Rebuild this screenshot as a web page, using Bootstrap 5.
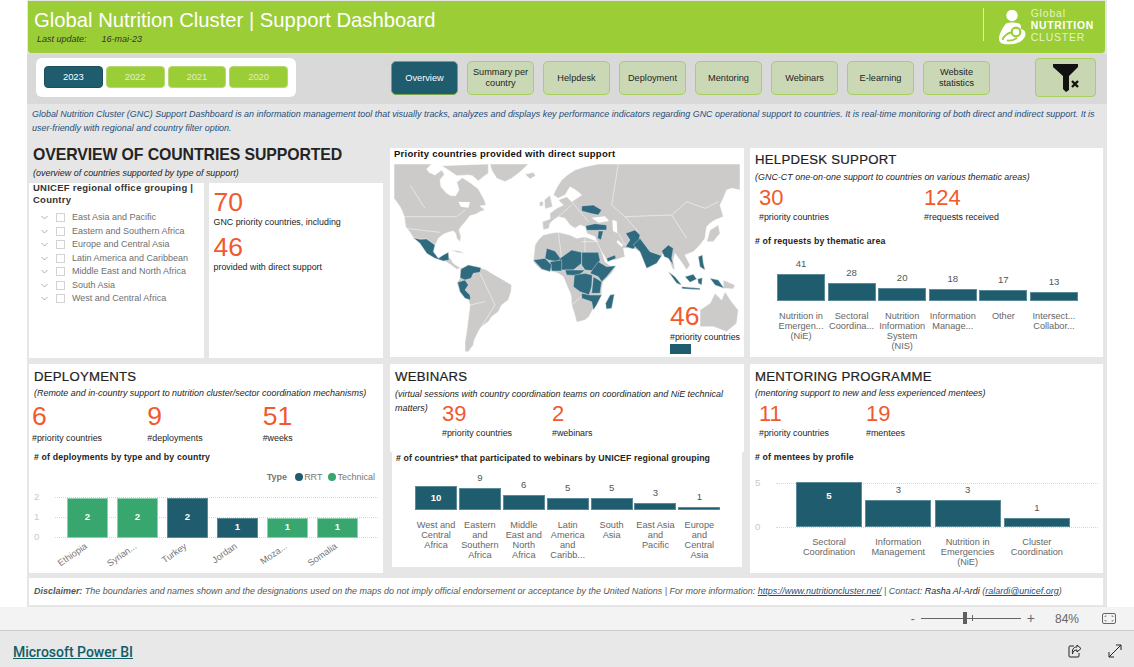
<!DOCTYPE html>
<html lang="en">
<head>
<meta charset="utf-8">
<title>Global Nutrition Cluster | Support Dashboard</title>
<link href="https://cdn.jsdelivr.net/npm/bootstrap@5.3.0/dist/css/bootstrap.min.css" rel="stylesheet">
<style>
html,body{height:667px;overflow:hidden;background:#fff;font-family:"Liberation Sans",Arial,sans-serif;color:#252423}
.shell{height:667px}
.canvas{width:1080px;height:607px;margin-left:27px;background:#e6e6e6}
.hdr{height:53px;margin:1px 2px 0 1px;background:#9bcd37;border-radius:0 0 4px 4px;border-bottom:1px solid #d5e8a8;padding:0 11px 0 6px;flex:none}
.hdr-title{font-size:20.25px;line-height:26px;color:#fff;margin:6px 0 0}
.hdr-date{font-size:9px;line-height:12px;font-style:italic;color:#333;margin:0 0 0 3px}
.hdr-date span{margin-left:15px}
.logo-rule{width:1px;height:33px;background:#dff0b5;margin:7px 15px 0 0}
.logo-mark{margin:9px 4px 0 0}
.logo-txt{color:#e6f2c9;font-size:10.4px;line-height:12px;margin:7px 0 0 0;letter-spacing:.85px}
.logo-txt b{display:block;color:#fff;letter-spacing:.75px}
.tools{height:50px;background:#d9d9d9;flex:none}
.year-card{width:260px;height:39px;background:#fff;border-radius:6px;margin:4px 95px 0 9px;padding:8px 8px 0;gap:3px}
.year-btn{width:59px;height:22px;padding:0;border-radius:4px;border:1px solid #b5d873;background:#9bcd37;color:#e3eec6;font-size:9.4px}
.year-btn.is-on{background:#1f5c6e;border-color:#1b4f5f;color:#fff}
.nav-btn{width:67px;height:34px;padding:0 4px;margin:7px 9px 0 0;border-radius:5px;border:1px solid #a8d05c;background:#cbd8b5;color:#252423;font-size:9.2px;line-height:11px}
.nav-btn.is-on{background:#1f5c6e;color:#fff;border-color:#7da54f}
.clear-btn{width:61px;height:39px;padding:0;margin:4px 0 0 36px;border-radius:4px;border:1px solid #a8d05c;background:#c9d6b2}
.intro{height:44px;flex:none;padding:3px 4px 0 5px;font-size:8.95px;line-height:14px;font-style:italic;color:#1f4e79}
.grid-main{display:grid;grid-template-columns:361px 360px 353px;grid-template-rows:209px 209px;row-gap:7px;margin-left:2px;width:1074px;flex:none}
.grid-main>section:nth-child(3n+1){margin-right:7px}
.grid-main>section:nth-child(3n+2){margin-right:6px}
.panel{background:#fff;overflow:hidden}
.ov-col{background:#e6e6e6}
.ov-title{font-size:15.85px;font-weight:700;line-height:20px;color:#252423;margin:-3px 0 0 4px;letter-spacing:-.1px}
.sub{font-size:8.95px;line-height:12px;font-style:italic;color:#252423}
.ov-sub{margin:2px 0 4px 4px}
.ov-row{gap:5px;height:175px}
.ov-box{background:#fff;width:175px;height:175px}
.ov-filter{padding:0 4px}
.flt-head{font-size:9.5px;line-height:12px;font-weight:700;letter-spacing:.25px;color:#333;margin:-1px 0 0}
.flt-list{margin:5px 0 0 8px}
.flt-row{height:13.5px;color:#6f6f6f;font-size:9px;line-height:13.5px}
.flt-row i{display:block;width:9px;height:9px;border:1px solid #d3d3d3;margin:0 7px 0 8px}
.ov-stat{padding:0 5px}
.num{color:#f15a2e;line-height:1}
.num-xl{font-size:26.5px}
.num-lg{font-size:22px}
.cap{font-size:8.9px;line-height:12px;color:#252423}
.h-sec{font-size:13.2px;line-height:18px;letter-spacing:.25px;color:#222;margin:0;-webkit-text-stroke:.2px #222}
.pad-sec{padding:2px 5px}
.map-title{font-size:9.5px;line-height:12px;font-weight:700;letter-spacing:.25px;color:#111;margin:0 0 4px 4px}
.map-wrap{position:relative;width:346px;height:188px;margin-left:4px}
.map-wrap svg{display:block}
.map-leg{position:absolute;right:-2px;bottom:-3px;width:72px;height:52px;font-size:8.9px;line-height:11px;color:#252423}
.map-leg .num{margin:0 0 2px;display:block}
.map-leg i{display:block;width:21px;height:10px;background:#1f5c6e;margin:1px 0 0}
.chart-t{font-size:8.75px;line-height:12px;font-weight:700;letter-spacing:.15px;color:#252423;margin:0}
.v{font-size:9.6px;line-height:10px;color:#555;text-align:center;margin-bottom:5px}
.lbl{font-size:9.2px;line-height:10px;color:#666;text-align:center}
.bar{background:#1f5c6e;box-shadow:inset 0 0 0 1px #5d8a98;display:flex;align-items:center;justify-content:center;color:#fff;font-size:9.6px;font-weight:700}
.bar.tech{background:#37a66f;box-shadow:inset 0 0 0 1px #8fcfae}
.col-h{width:48px;margin-right:2.6px}
.col-w{width:42px;margin-right:1.9px}
.col-m{width:66px;margin-right:3.3px}
.col-d{width:41px;margin-right:9px}
.dep-stats{width:116px}
.stack{display:grid}
.stack>*{grid-area:1/1}
.gline{height:20px;font-size:9.6px;color:#c9c9c9}
.gline span{width:10px}
.gline em{display:block;flex:1;border-top:1px dotted #d8d8d8;margin-left:11px}
.rot{width:50px;height:36px;padding-right:29px;justify-content:flex-end}
.rot span{white-space:nowrap;font-size:9.2px;line-height:10px;color:#777;transform:rotate(-35deg);transform-origin:100% 0}
.leg{font-size:9px;color:#777;gap:1px;line-height:12px}
.leg i{display:block;width:8px;height:8px;border-radius:50%}
.web-top{height:88px;padding:4px 5px 0}
.web-bot{background:#fff;height:115px;margin:0 2px;padding:0 4px}
.disc{height:27px;flex:none;width:1074px;margin:5px 0 0 2px;background:#fff;font-size:8.97px;line-height:12px;font-style:italic;color:#555;padding:7px 5px 0;white-space:nowrap}
.disc b{font-weight:400;color:#252423}
.disc a{color:#1f4e79}
.zoombar{height:24px;flex:none;background:#f3f3f3;border-bottom:1px solid #ccc;padding-right:18px;color:#666;font-size:12px}
.zs{position:relative;width:100px;height:1px;background:#666;margin:0 6px}
.zs i{position:absolute;left:42px;top:-6px;width:4px;height:12px;background:#5f5f5f}
.zs u{position:absolute;left:51px;top:-3px;width:1px;height:6px;background:#666}
.foot{height:36px;flex:none;background:#e8e8e8;padding:3px 13px 0}
.foot a{font-family:Roboto,sans-serif;font-size:14px;font-weight:500;color:#115e67;margin-top:3px}
.row1-sec{margin-top:1px}
</style>
</head>
<body>
<div class="shell d-flex flex-column">
<main class="canvas d-flex flex-column">
  <header class="hdr d-flex justify-content-between">
    <div>
      <h1 class="hdr-title fw-normal">Global Nutrition Cluster | Support Dashboard</h1>
      <p class="hdr-date">Last update:<span>16-mai-23</span></p>
    </div>
    <div class="d-flex">
      <div class="logo-rule"></div>
      <svg class="logo-mark" width="28" height="36" viewBox="0 0 28 36" aria-hidden="true"><circle cx="13" cy="5.500" r="5.700" fill="#fff"/><path d="M7 13.500c3-1.500 10-1.500 13 0 2 1 2.500 3 1.500 5.500 3 .5 5 2 5 5 0 5-6 9-12 10-4 .5-9 .5-11.500-.5C1 32.500 0 31 0 28.500 0 24 4 17 7 13.500z" fill="#fff"/><circle cx="17" cy="22" r="4.300" fill="none" stroke="#9bcd37" stroke-width="2.200"/><path d="M3.500 30c1-4 5-7 9-7.500 M8 30.500c3 .5 7-.5 10-2.500" fill="none" stroke="#9bcd37" stroke-width="1.800"/></svg>
      <div class="logo-txt">Global<b>NUTRITION</b>CLUSTER</div>
    </div>
  </header>

  <div class="tools d-flex align-items-start">
    <div class="year-card d-flex">
      <button class="btn year-btn is-on">2023</button>
      <button class="btn year-btn">2022</button>
      <button class="btn year-btn">2021</button>
      <button class="btn year-btn">2020</button>
    </div>
    <button class="btn nav-btn is-on">Overview</button>
    <button class="btn nav-btn">Summary per country</button>
    <button class="btn nav-btn">Helpdesk</button>
    <button class="btn nav-btn">Deployment</button>
    <button class="btn nav-btn">Mentoring</button>
    <button class="btn nav-btn">Webinars</button>
    <button class="btn nav-btn">E-learning</button>
    <button class="btn nav-btn">Website statistics</button>
    <button class="btn clear-btn" aria-label="Clear filters"><svg width="34" height="30" viewBox="0 0 34 30"><path d="M4 1h25v3L20 13v14l-3 2-3-3V13L4 4z" fill="#111"/><path d="M23 18l6 6M29 18l-6 6" stroke="#111" stroke-width="2.400"/></svg></button>
  </div>

  <p class="intro mb-0">Global Nutrition Cluster (GNC) Support Dashboard is an information management tool that visually tracks, analyzes and displays key performance indicators regarding GNC operational support to countries. It is real-time monitoring of both direct and indirect support. It is user-friendly with regional and country filter option.</p>

  <div class="grid-main">
    <section class="ov-col">
      <h2 class="ov-title">OVERVIEW OF COUNTRIES SUPPORTED</h2>
      <p class="sub ov-sub">(overview of countries supported by type of support)</p>
      <div class="d-flex ov-row">
        <div class="ov-box ov-filter">
          <p class="flt-head">UNICEF regional office grouping | Country</p>
          <div class="flt-list">
            <div class="flt-row d-flex align-items-center"><svg width="7" height="5" viewBox="0 0 7 5"><path d="M.5 1l3 3 3-3" fill="none" stroke="#999" stroke-width=".8"/></svg><i></i>East Asia and Pacific</div>
            <div class="flt-row d-flex align-items-center"><svg width="7" height="5" viewBox="0 0 7 5"><path d="M.5 1l3 3 3-3" fill="none" stroke="#999" stroke-width=".8"/></svg><i></i>Eastern and Southern Africa</div>
            <div class="flt-row d-flex align-items-center"><svg width="7" height="5" viewBox="0 0 7 5"><path d="M.5 1l3 3 3-3" fill="none" stroke="#999" stroke-width=".8"/></svg><i></i>Europe and Central Asia</div>
            <div class="flt-row d-flex align-items-center"><svg width="7" height="5" viewBox="0 0 7 5"><path d="M.5 1l3 3 3-3" fill="none" stroke="#999" stroke-width=".8"/></svg><i></i>Latin America and Caribbean</div>
            <div class="flt-row d-flex align-items-center"><svg width="7" height="5" viewBox="0 0 7 5"><path d="M.5 1l3 3 3-3" fill="none" stroke="#999" stroke-width=".8"/></svg><i></i>Middle East and North Africa</div>
            <div class="flt-row d-flex align-items-center"><svg width="7" height="5" viewBox="0 0 7 5"><path d="M.5 1l3 3 3-3" fill="none" stroke="#999" stroke-width=".8"/></svg><i></i>South Asia</div>
            <div class="flt-row d-flex align-items-center"><svg width="7" height="5" viewBox="0 0 7 5"><path d="M.5 1l3 3 3-3" fill="none" stroke="#999" stroke-width=".8"/></svg><i></i>West and Central Africa</div>
          </div>
        </div>
        <div class="ov-box ov-stat">
          <div class="num num-xl" style="margin-top:6px">70</div>
          <div class="cap" style="margin-top:0">GNC priority countries, including</div>
          <div class="num num-xl" style="margin-top:6px">46</div>
          <div class="cap" style="margin-top:1px">provided with direct support</div>
        </div>
      </div>
    </section>

    <section class="panel">
      <h2 class="map-title">Priority countries provided with direct support</h2>
      <div class="map-wrap">
        <svg width="346" height="188" viewBox="27 57 1038 564" role="img" aria-label="World map of priority countries">
          <g fill="#cccbca" stroke="#fff" stroke-width="1.500" stroke-linejoin="round">
            <path d="M27 57L140 57 125 72 132 82 150 90 170 75 178 88 165 105 168 125 185 145 198 152 212 152 222 135 218 120 215 112 232 98 248 108 258 115 280 132 290 150 298 165 303 180 285 183 300 195 285 200 272 208 255 212 245 225 240 232 228 245 222 255 228 275 225 290 215 280 212 265 205 258 190 262 175 268 160 280 156 290 150 300 125 282 105 283 85 278 75 262 62 245 58 215 50 195 45 185 27 160Z"/>
            <path d="M170 62L310 57 310 85 295 95 280 108 262 92 250 90 215 92 190 75Z"/>
            <path d="M175 345L195 338 205 355 228 370 215 373 195 358Z"/>
            <path d="M195 314L225 318 240 326 215 322Z"/>
            <path d="M315 57L430 57 415 72 400 85 380 100 360 110 335 100 320 75Z"/>
            <path d="M420 88L445 82 452 92 435 102Z"/>
            <path d="M478 165L495 150 503 185 480 192Z"/>
            <path d="M463 172L474 168 475 182 464 184Z"/>
            <path d="M225 372L250 360 285 368 305 375 320 385 350 402 380 420 378 440 370 465 350 480 340 500 320 515 310 530 290 545 280 560 268 585 265 600 250 620 240 620 240 590 245 560 250 520 255 480 250 465 225 440 215 415 225 400Z"/>
            <path d="M450 300L462 282 475 270 500 264 520 262 555 270 575 280 600 275 640 290 650 320 660 350 675 362 692 365 680 385 655 410 650 430 650 450 635 470 625 490 612 515 600 525 575 532 568 505 560 480 558 450 545 420 535 395 520 385 495 378 470 375 455 362 445 350Z"/>
            <path d="M505 150L515 128 530 105 550 88 570 75 600 65 640 57 1065 57 1065 135 1040 130 1025 135 1015 160 1005 180 1015 215 990 225 975 235 965 245 960 280 945 300 925 320 900 330 915 360 905 375 895 360 885 345 870 325 865 345 870 375 862 370 850 340 835 325 815 355 785 370 775 345 765 320 745 310 715 310 720 335 690 345 665 345 650 320 640 300 630 275 605 265 600 245 585 240 570 250 555 240 540 220 520 215 505 225 495 235 492 250 475 255 472 230 495 222 495 205 515 190 535 180 520 165 545 155 560 170 590 150 570 135 555 125 540 150 520 160Z"/>
            <path d="M975 255L1000 240 1005 265 985 290 965 290Z"/>
            <path d="M945 495L975 475 990 445 1010 465 1020 440 1040 470 1060 495 1055 535 1025 560 985 545 945 545Z"/>
            <path d="M1015 405L1050 420 1045 432 1015 430Z"/>
          </g>
          <g fill="#fff">
            <path d="M620 218L660 214 672 228 640 233Z"/>
            <path d="M682 225L695 228 697 265 684 258Z"/>
            <path d="M565 130L585 145 560 165 555 150Z"/>
            <path d="M220 170L255 172 250 188 228 185Z"/>
            <path d="M698 285L715 300 710 306 695 292Z"/>
            <path d="M530 225L552 245 545 248 526 232Z"/>
          </g>
          <g fill="none" stroke="#fff" stroke-width="1.500">
            <path d="M58 215L215 215 240 195M75 120L120 190M60 250L165 262M700 57L680 180 720 215 860 210 905 170 960 190 1000 170M560 170L610 230M520 215L560 180M720 215L760 260M860 210L905 280M600 275L600 325M520 262L530 340M640 290L590 290M700 265L720 300M285 385L330 480 280 560M255 480L300 470M600 445L560 480"/>
          </g>
          <g fill="#2f6a7e" stroke="#dbe6ea" stroke-width="1.300" stroke-linejoin="round">
            <path d="M85 278L105 283 125 282 150 300 145 320 160 340 175 330 190 322 192 345 175 348 150 340 125 325 105 295Z"/>
            <path d="M228 372L250 360 288 368 285 382 265 385 258 400 240 405 225 398Z"/>
            <path d="M218 412L240 405 250 420 240 435 255 450 257 465 240 460 225 440Z"/>
            <path d="M485 310L510 318 530 345 515 350 490 345 480 340Z"/>
            <path d="M525 340L560 315 590 322 590 355 565 375 530 375 515 355Z"/>
            <path d="M495 350L530 345 530 378 500 378Z"/>
            <path d="M590 322L640 322 645 345 635 378 600 375 590 360Z"/>
            <path d="M640 350L665 365 692 362 665 395 650 410 640 395 615 385 625 370Z"/>
            <path d="M445 345L480 340 500 360 495 380 470 372Z"/>
            <path d="M540 375L600 375 580 392 545 390Z"/>
            <path d="M568 390L600 385 622 390 620 425 612 450 585 440 565 425Z"/>
            <path d="M625 395L650 410 645 445 620 445Z"/>
            <path d="M590 445L615 450 650 450 635 480 625 495 620 470 590 460Z"/>
            <path d="M675 450L688 448 680 490 664 492 662 475Z"/>
            <path d="M590 183L625 180 650 195 640 210 615 205 590 198Z"/>
            <path d="M602 242L630 236 665 240 665 255 630 256 605 256Z"/>
            <path d="M640 258L655 258 648 285 638 280Z"/>
            <path d="M665 340L690 330 693 340 668 350Z"/>
            <path d="M722 265L750 255 765 270 760 295 745 312 722 305 735 285Z"/>
            <path d="M745 300L765 280 795 320 830 332 815 355 785 370 765 320Z"/>
            <path d="M830 318L850 300 865 310 860 340 865 360 850 340 838 335Z"/>
            <path d="M940 335L952 330 955 355 960 375 945 365Z"/>
            <path d="M850 380L870 395 890 420 875 415Z"/>
            <path d="M900 395L925 388 935 402 915 412Z"/>
            <path d="M890 425L945 430 945 434 892 431Z"/>
            <path d="M938 402L952 398 950 420 940 415Z"/>
            <path d="M975 400L1000 405 1017 430 990 420Z"/>
          </g>
        </svg>
        <div class="map-leg">
          <span class="num num-xl">46</span>#priority countries<i></i>
        </div>
      </div>
    </section>

    <section class="panel pad-sec">
      <h2 class="h-sec row1-sec">HELPDESK SUPPORT</h2>
      <p class="sub mb-0" style="margin-top:2px">(GNC-CT one-on-one support to countries on various thematic areas)</p>
      <div class="d-flex" style="margin:4px 0 0 4px">
        <div style="width:165px"><div class="num num-lg">30</div><div class="cap" style="margin-top:2px">#priority countries</div></div>
        <div><div class="num num-lg">124</div><div class="cap" style="margin-top:2px">#requests received</div></div>
      </div>
      <p class="chart-t" style="margin-top:12px">
        # of requests by thematic area</p>
      <div class="d-flex align-items-end" style="height:54px;margin-left:22px">
        <div class="col-h"><div class="v">41</div><div class="bar" style="height:27px"></div></div>
        <div class="col-h"><div class="v">28</div><div class="bar" style="height:18px"></div></div>
        <div class="col-h"><div class="v">20</div><div class="bar" style="height:13px"></div></div>
        <div class="col-h"><div class="v">18</div><div class="bar" style="height:12px"></div></div>
        <div class="col-h"><div class="v">17</div><div class="bar" style="height:11px"></div></div>
        <div class="col-h"><div class="v">13</div><div class="bar" style="height:9px"></div></div>
      </div>
      <div class="d-flex" style="margin:10px 0 0 22px">
        <div class="col-h lbl">Nutrition in Emergen... (NiE)</div>
        <div class="col-h lbl">Sectoral Coordina...</div>
        <div class="col-h lbl">Nutrition Information System (NIS)</div>
        <div class="col-h lbl">Information Manage...</div>
        <div class="col-h lbl">Other</div>
        <div class="col-h lbl">Intersect... Collabor...</div>
      </div>
    </section>

    <section class="panel" style="padding:4px 5px 2px">
      <h2 class="h-sec">DEPLOYMENTS</h2>
      <p class="sub mb-0" style="margin-top:1px">(Remote and in-country support to nutrition cluster/sector coordination mechanisms)</p>
      <div class="d-flex" style="margin:4px 0 0 -2px">
        <div class="dep-stats"><div class="num num-xl">6</div><div class="cap" style="margin-top:2px">#priority countries</div></div>
        <div class="dep-stats"><div class="num num-xl">9</div><div class="cap" style="margin-top:2px">#deployments</div></div>
        <div class="dep-stats"><div class="num num-xl">51</div><div class="cap" style="margin-top:2px">#weeks</div></div>
      </div>
      <p class="chart-t" style="margin-top:7px">
        # of deployments by type and by country</p>
      <div class="leg d-flex align-items-center justify-content-end" style="margin:8px 3px 0 0">
        <b class="fw-bold" style="margin-right:7px">Type</b><i style="background:#1f5c6e"></i>RRT<i style="background:#37a66f;margin-left:5px"></i>Technical
      </div>
      <div class="stack" style="margin-top:5px">
        <div>
          <div class="gline d-flex align-items-center"><span>2</span><em></em></div>
          <div class="gline d-flex align-items-center"><span>1</span><em></em></div>
          <div class="gline d-flex align-items-center"><span>0</span><em></em></div>
        </div>
        <div class="d-flex align-items-end" style="height:50px;margin-left:33px">
          <div class="col-d"><div class="bar tech" style="height:40px">2</div></div>
          <div class="col-d"><div class="bar tech" style="height:40px">2</div></div>
          <div class="col-d"><div class="bar" style="height:40px">2</div></div>
          <div class="col-d"><div class="bar" style="height:20px">1</div></div>
          <div class="col-d"><div class="bar tech" style="height:20px">1</div></div>
          <div class="col-d"><div class="bar tech" style="height:20px">1</div></div>
        </div>
      </div>
      <div class="d-flex" style="margin-left:28px;margin-top:-7px">
        <div class="rot d-flex"><span>Ethiopia</span></div>
        <div class="rot d-flex"><span>Syrian...</span></div>
        <div class="rot d-flex"><span>Turkey</span></div>
        <div class="rot d-flex"><span>Jordan</span></div>
        <div class="rot d-flex"><span>Moza...</span></div>
        <div class="rot d-flex"><span>Somalia</span></div>
      </div>
    </section>

    <section class="ov-col">
      <div class="panel web-top">
        <h2 class="h-sec">WEBINARS</h2>
        <p class="sub mb-0" style="margin-top:1px;line-height:14px">(virtual sessions with country coordination teams on coordination and NiE technical</p>
        <div class="d-flex">
          <p class="sub mb-0" style="width:47px;line-height:14px">matters)</p>
          <div style="width:110px;margin-top:2px"><div class="num num-lg">39</div><div class="cap" style="margin-top:2px">#priority countries</div></div>
          <div style="margin-top:2px"><div class="num num-lg">2</div><div class="cap" style="margin-top:2px">#webinars</div></div>
        </div>
      </div>
      <div class="web-bot">
        <p class="chart-t" style="letter-spacing:.1px">
          # of countries* that participated to webinars by UNICEF regional grouping</p>
        <div class="d-flex align-items-end" style="height:46px;margin-left:19px">
          <div class="col-w"><div class="bar" style="height:24px">10</div></div>
          <div class="col-w"><div class="v">9</div><div class="bar" style="height:22px"></div></div>
          <div class="col-w"><div class="v">6</div><div class="bar" style="height:15px"></div></div>
          <div class="col-w"><div class="v">5</div><div class="bar" style="height:12px"></div></div>
          <div class="col-w"><div class="v">5</div><div class="bar" style="height:12px"></div></div>
          <div class="col-w"><div class="v">3</div><div class="bar" style="height:7px"></div></div>
          <div class="col-w"><div class="v">1</div><div class="bar" style="height:3px"></div></div>
        </div>
        <div class="d-flex" style="margin:10px 0 0 19px">
          <div class="col-w lbl">West and Central Africa</div>
          <div class="col-w lbl">Eastern and Southern Africa</div>
          <div class="col-w lbl">Middle East and North Africa</div>
          <div class="col-w lbl">Latin America and Caribb...</div>
          <div class="col-w lbl">South Asia</div>
          <div class="col-w lbl">East Asia and Pacific</div>
          <div class="col-w lbl">Europe and Central Asia</div>
        </div>
      </div>
    </section>

    <section class="panel" style="padding:4px 5px 2px">
      <h2 class="h-sec">MENTORING PROGRAMME</h2>
      <p class="sub mb-0" style="margin-top:1px">(mentoring support to new and less experienced mentees)</p>
      <div class="d-flex" style="margin:4px 0 0 4px">
        <div style="width:107px"><div class="num num-lg">11</div><div class="cap" style="margin-top:2px">#priority countries</div></div>
        <div><div class="num num-lg">19</div><div class="cap" style="margin-top:2px">#mentees</div></div>
      </div>
      <p class="chart-t" style="margin-top:12px">
        # of mentees by profile</p>
      <div class="stack" style="margin-top:10px">
        <div>
          <div class="gline d-flex align-items-center" style="margin-bottom:24px"><span>5</span><em></em></div>
          <div class="gline d-flex align-items-center"><span>0</span><em></em></div>
        </div>
        <div class="d-flex align-items-end" style="height:54px;margin-left:41px">
          <div class="col-m"><div class="bar" style="height:45px;align-items:flex-start;padding-top:7px">5</div></div>
          <div class="col-m"><div class="v">3</div><div class="bar" style="height:27px"></div></div>
          <div class="col-m"><div class="v">3</div><div class="bar" style="height:27px"></div></div>
          <div class="col-m"><div class="v">1</div><div class="bar" style="height:9px"></div></div>
        </div>
      </div>
      <div class="d-flex" style="margin:0 0 0 41px">
        <div class="col-m lbl">Sectoral Coordination</div>
        <div class="col-m lbl">Information Management</div>
        <div class="col-m lbl">Nutrition in Emergencies (NiE)</div>
        <div class="col-m lbl">Cluster Coordination</div>
      </div>
    </section>
  </div>

  <p class="disc mb-0"><strong class="fw-bold">Disclaimer:</strong> The boundaries and names shown and the designations used on the maps do not imply official endorsement or acceptance by the United Nations | For more information: <a href="#">https://www.nutritioncluster.net/</a> | Contact: <b>Rasha Al-Ardi</b> (<a href="#">ralardi@unicef.org</a>)</p>
</main>

<div class="zoombar d-flex align-items-center justify-content-end">
  <span>-</span><div class="zs"><i></i><u></u></div><span style="font-size:14px">+</span>
  <span style="margin:0 23px 0 20px">84%</span>
  <svg width="14" height="11" viewBox="0 0 14 11"><rect x=".5" y=".5" width="13" height="10" rx="1.500" fill="none" stroke="#666"/><path d="M3 4V3h1.500M9.500 3H11v1M11 7v1H9.500M4.500 8H3V7" fill="none" stroke="#666" stroke-width=".8"/></svg>
</div>
<footer class="foot d-flex align-items-center justify-content-between">
  <a href="#">Microsoft Power BI</a>
  <div class="d-flex align-items-center" style="gap:26px;margin-right:-1px">
    <svg width="14" height="14" viewBox="0 0 14 14"><path d="M6 2H2a1 1 0 0 0-1 1v9a1 1 0 0 0 1 1h8a1 1 0 0 0 1-1V9" fill="none" stroke="#222"/><path d="M9 1l4 3.500L9 8V6C6 6 5 7.500 4.500 10 4 6 5 3 9 3z" fill="none" stroke="#222"/></svg>
    <svg width="14" height="14" viewBox="0 0 14 14"><path d="M1 13L13 1M8 1h5v5M1 8v5h5" fill="none" stroke="#222"/></svg>
  </div>
</footer>
</div>
<script src="https://cdn.jsdelivr.net/npm/bootstrap@5.3.0/dist/js/bootstrap.bundle.min.js"></script>
</body>
</html>
